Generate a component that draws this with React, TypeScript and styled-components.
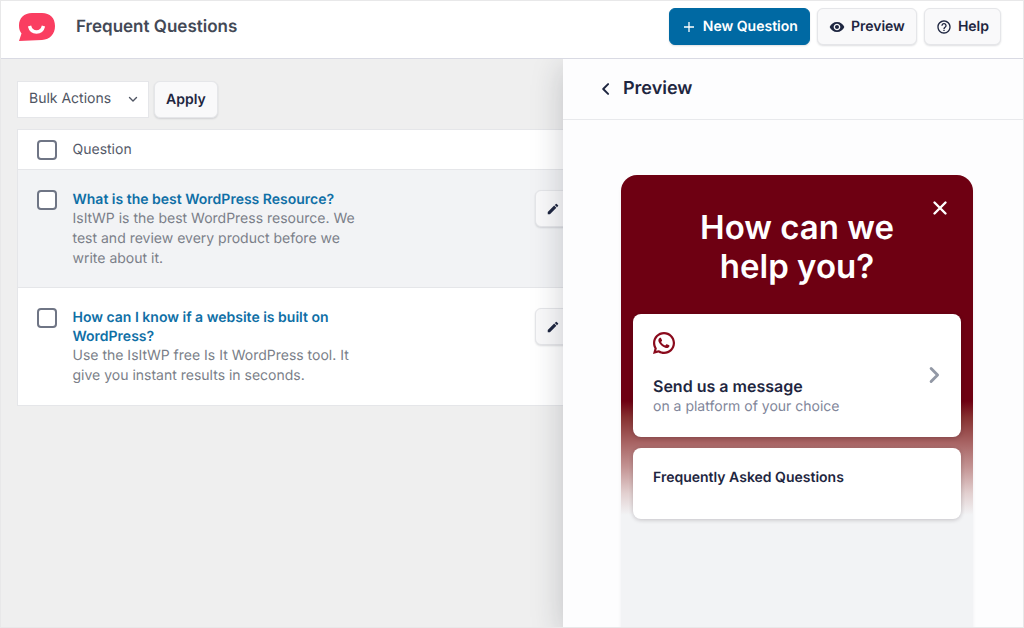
import React from "react";
import styled, { createGlobalStyle, css } from "styled-components";
import { MdEdit, MdVisibility, MdHelpOutline } from "react-icons/md";
import { RiWhatsappLine } from "react-icons/ri";

const GlobalStyle = createGlobalStyle`
  *, *::before, *::after { box-sizing: border-box; }
  body {
    margin: 0;
    background: #efefef;
    color: #1e2640;
    font-family: Inter, "Liberation Sans", sans-serif;
    font-size: 14px;
    line-height: 20px;
    text-rendering: geometricPrecision;
  }
  button, select, input { font: inherit; color: inherit; margin: 0; text-rendering: inherit; }
  h1, h2, h3, p { margin: 0; }
`;

const Page = styled.div`
  display: flex;
  flex-direction: column;
  min-height: 100vh;
  border: 1px solid #e8e8e9;
`;

const TopBar = styled.header`
  display: flex;
  align-items: center;
  height: 58px;
  padding: 0 22px 6px 17px;
  background: #fff;
  border-bottom: 1px solid #d9dae3;
`;

const PageTitle = styled.h1`
  margin-left: 20px;
  font-size: 17px;
  line-height: 24px;
  font-weight: 600;
  color: #434956;
`;

const TopActions = styled.div`
  display: flex;
  gap: 7px;
  margin-left: auto;
`;

const Button = styled.button<{ $primary?: boolean }>`
  display: inline-flex;
  align-items: center;
  justify-content: center;
  gap: 6px;
  height: 37px;
  padding: 0 11px;
  border: 1px solid #e5e6e9;
  border-radius: 6px;
  background: #f9f9fa;
  font-weight: 600;
  white-space: nowrap;
  box-shadow: 0 1px 2px rgba(20, 25, 45, 0.14);
  cursor: pointer;

  ${({ $primary }) =>
    $primary &&
    css`
      padding: 0 11px 0 13px;
      gap: 8px;
      background: #0069a3;
      border-color: #0069a3;
      color: #fff;
    `}
`;

const Main = styled.main`
  position: relative;
  flex: 1;
  overflow: hidden;
  padding: 22px 16px;
`;

const BulkBar = styled.form`
  display: flex;
  gap: 5px;
  margin-bottom: 11px;
`;

const SelectWrap = styled.div`
  position: relative;
  width: 132px;

  svg {
    position: absolute;
    right: 11px;
    top: 13px;
    pointer-events: none;
  }
`;

const Select = styled.select`
  appearance: none;
  width: 100%;
  height: 37px;
  padding: 0 28px 1px 11px;
  border: 1px solid #e5e6e9;
  border-radius: 0;
  background: #fff;
  color: #4f5563;
`;

const Table = styled.table`
  width: 100%;
  table-layout: fixed;
  border-collapse: collapse;
  background: #fff;
  border: 1px solid #e5e6e9;
`;

const HeadCell = styled.th<{ $width?: number }>`
  width: ${({ $width }) => ($width ? `${$width}px` : "auto")};
  height: 40px;
  padding: 0;
  text-align: left;
  font-weight: 400;
  color: #555a69;
`;

const Row = styled.tr<{ $active?: boolean }>`
  height: 118px;
  border-top: 1px solid #e5e6e9;
  background: ${({ $active }) => ($active ? "#f2f3f5" : "#fff")};
`;

const Cell = styled.td`
  padding: 20px 0 0;
  vertical-align: top;
`;

const CheckBox = styled.input.attrs({ type: "checkbox" })`
  appearance: none;
  display: block;
  width: 20px;
  height: 20px;
  margin-left: 19px;
  border: 2px solid #6f7585;
  border-radius: 4px;
  background: #fff;

  &:checked {
    background: #0069a3;
  }
`;

const QuestionText = styled.div`
  max-width: 286px;
`;

const QuestionLink = styled.a`
  display: block;
  line-height: 19px;
  font-weight: 600;
  color: #0f6fa6;
  text-decoration: none;
`;

const Answer = styled.p`
  color: #7b7f89;
`;

const EditButton = styled(Button)`
  padding: 0 10px;
`;

const Drawer = styled.aside`
  position: absolute;
  top: 0;
  right: 0;
  bottom: 0;
  display: flex;
  flex-direction: column;
  width: 460px;
  max-width: 100%;
  background: #fdfdfe;
  box-shadow: 0 8px 30px rgba(30, 35, 50, 0.22);
`;

const DrawerHeader = styled.header`
  display: flex;
  align-items: center;
  gap: 10px;
  height: 61px;
  padding-left: 36px;
  border-bottom: 1px solid #e8e9ec;
`;

const DrawerTitle = styled.h2`
  font-size: 18px;
  line-height: 24px;
  font-weight: 600;
`;

const DrawerBody = styled.div`
  display: flex;
  flex: 1;
  padding: 55px 50px 0 58px;
`;

const IconButton = styled.button`
  display: inline-flex;
  padding: 0;
  border: 0;
  background: none;
  cursor: pointer;
`;

const Widget = styled.section`
  position: relative;
  flex: 1;
  padding: 33px 12px;
  border-radius: 16px 16px 0 0;
  background: linear-gradient(
      to bottom,
      #6e0012 226px,
      #863030 242px,
      #a86464 268px,
      #c39393 292px,
      #e2cfcf 318px,
      #f2f3f5 340px
    )
    #f2f3f5;
  box-shadow: 0 4px 4px rgba(30, 35, 50, 0.06);
`;

const WidgetTitle = styled.h3`
  max-width: 240px;
  margin: 0 auto 28px;
  text-align: center;
  font-size: 33px;
  line-height: 39px;
  font-weight: 600;
  color: #fff;
`;

const CloseButton = styled(IconButton)`
  position: absolute;
  top: 24px;
  right: 24px;
`;

const Card = styled.div<{ $tall?: boolean }>`
  display: flex;
  align-items: center;
  justify-content: space-between;
  padding: ${({ $tall }) => ($tall ? "18px 18px 20px 20px" : "20px 20px 31px")};
  border-radius: 8px;
  background: #fff;
  box-shadow: 0 1px 4px rgba(30, 20, 30, 0.22);

  & + & {
    margin-top: 11px;
  }
`;

const CardTitle = styled.p<{ $large?: boolean }>`
  font-size: ${({ $large }) => ($large ? 16 : 14)}px;
  line-height: ${({ $large }) => ($large ? 22 : 20)}px;
  font-weight: 600;
`;

const CardIcon = styled.div`
  display: flex;
  margin-bottom: 21px;
  color: #8a0a1c;
`;

const CardNote = styled.p`
  color: #81869a;
`;

type ChevronProps = { points: string; size: number; color: string; weight: number };

const Chevron = ({ points, size, color, weight }: ChevronProps) => (
  <svg width={size} height={size} viewBox="0 0 10 10" fill="none" aria-hidden="true">
    <polyline points={points} stroke={color} strokeWidth={weight} strokeLinecap="round" strokeLinejoin="round" />
  </svg>
);

const Logo = () => (
  <svg width="38" height="30" viewBox="0 0 38 30" role="img" aria-label="Chat logo">
    <path
      d="M14 1H24C32 1 37 6 37 14C37 22 32 27.500 24 28L1 29L3.500 21.500C1.800 19 1 17 1 13.500C1 6 6 1 14 1Z"
      fill="#fa3e61"
    />
    <path d="M11.500 14C13.500 22 23.500 22 25.500 14" stroke="#fff" strokeWidth="3.400" fill="none" />
  </svg>
);

const questions = [
  {
    title: "What is the best WordPress Resource?",
    answer: "IsItWP is the best WordPress resource. We test and review every product before we write about it.",
  },
  {
    title: "How can I know if a website is built on WordPress?",
    answer: "Use the IsItWP free Is It WordPress tool. It give you instant results in seconds.",
  },
];

export default function App() {
  return (
    <>
      <GlobalStyle />
      <Page>
        <TopBar>
          <Logo />
          <PageTitle>Frequent Questions</PageTitle>
          <TopActions>
            <Button $primary>
              <svg width="12" height="12" viewBox="0 0 12 12" aria-hidden="true">
                <path d="M6 1V11M1 6H11" stroke="#fff" strokeWidth="1.300" />
              </svg>
              New Question
            </Button>
            <Button>
              <MdVisibility size={16} />
              Preview
            </Button>
            <Button>
              <MdHelpOutline size={16} />
              Help
            </Button>
          </TopActions>
        </TopBar>
        <Main>
          <BulkBar onSubmit={(e: React.FormEvent) => e.preventDefault()}>
            <SelectWrap>
              <Select aria-label="Bulk Actions">
                <option>Bulk Actions</option>
              </Select>
              <Chevron points="1.500,3.500 5,7 8.500,3.500" size={10} color="#4f5563" weight={1.4} />
            </SelectWrap>
            <Button type="submit">Apply</Button>
          </BulkBar>
          <Table>
            <thead>
              <tr>
                <HeadCell $width={55}>
                  <CheckBox aria-label="Select all questions" />
                </HeadCell>
                <HeadCell $width={462}>Question</HeadCell>
                <HeadCell aria-label="Actions" />
              </tr>
            </thead>
            <tbody>
              {questions.map((q, i) => (
                <Row key={q.title} $active={i === 0}>
                  <Cell>
                    <CheckBox aria-label={`Select: ${q.title}`} />
                  </Cell>
                  <Cell>
                    <QuestionText>
                      <QuestionLink href="#">{q.title}</QuestionLink>
                      <Answer>{q.answer}</Answer>
                    </QuestionText>
                  </Cell>
                  <Cell>
                    <EditButton aria-label={`Edit: ${q.title}`}>
                      <MdEdit size={14} />
                    </EditButton>
                  </Cell>
                </Row>
              ))}
            </tbody>
          </Table>
          <Drawer>
            <DrawerHeader>
              <IconButton aria-label="Back">
                <Chevron points="6.500,1.500 3,5 6.500,8.500" size={14} color="#1e2640" weight={1.4} />
              </IconButton>
              <DrawerTitle>Preview</DrawerTitle>
            </DrawerHeader>
            <DrawerBody>
              <Widget>
                <CloseButton aria-label="Close">
                  <svg width="18" height="18" viewBox="0 0 18 18" aria-hidden="true">
                    <path d="M3.500 3.500L14.500 14.500M14.500 3.500L3.500 14.500" stroke="#fff" strokeWidth="2.400" strokeLinecap="round" />
                  </svg>
                </CloseButton>
                <WidgetTitle>How can we help you?</WidgetTitle>
                <Card $tall>
                  <div>
                    <CardIcon>
                      <RiWhatsappLine size={22} viewBox="2 2 20 20" />
                    </CardIcon>
                    <CardTitle $large>Send us a message</CardTitle>
                    <CardNote>on a platform of your choice</CardNote>
                  </div>
                  <Chevron points="3.400,1.400 7,5 3.400,8.600" size={18} color="#9298a5" weight={1.6} />
                </Card>
                <Card>
                  <CardTitle>Frequently Asked Questions</CardTitle>
                </Card>
              </Widget>
            </DrawerBody>
          </Drawer>
        </Main>
      </Page>
    </>
  );
}
